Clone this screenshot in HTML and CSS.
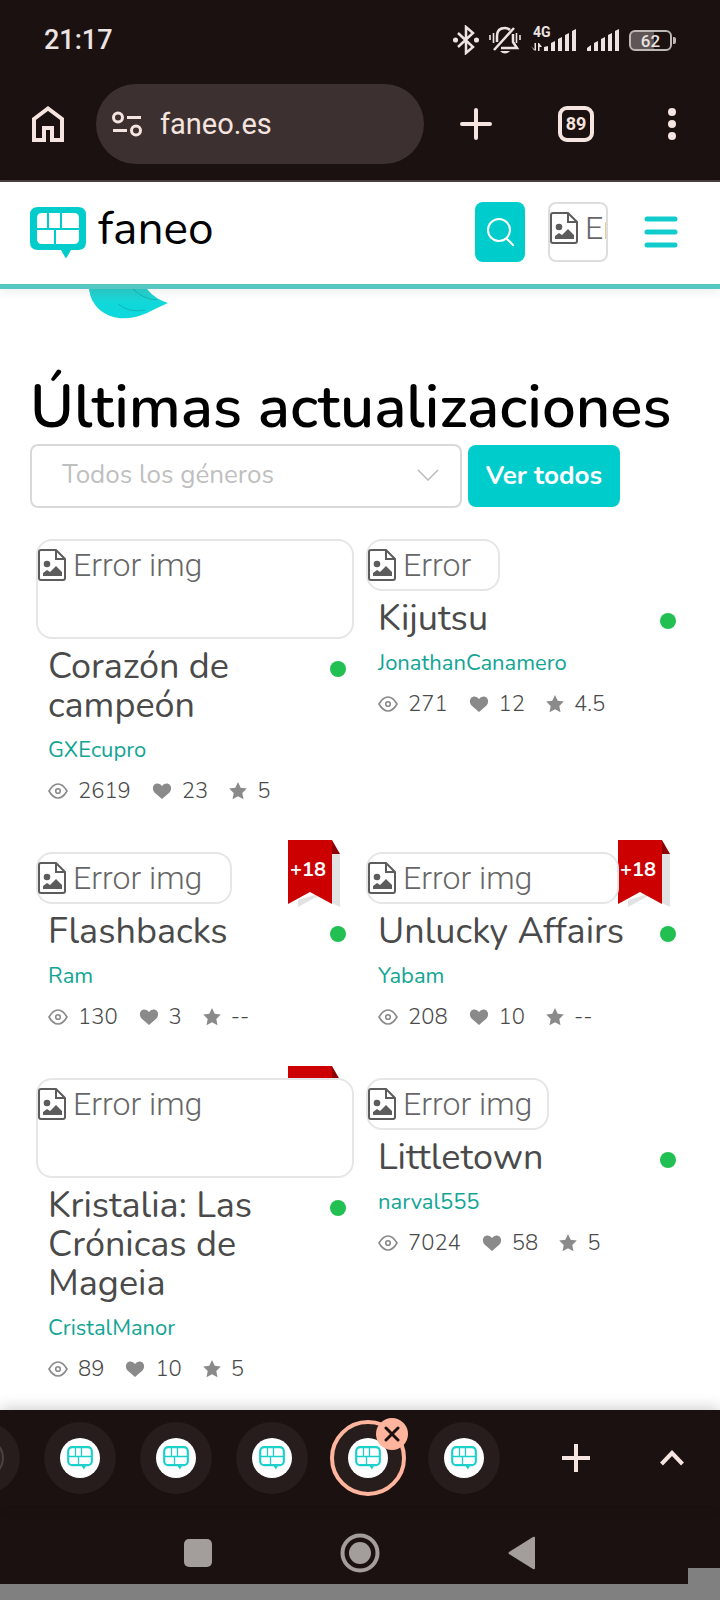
FILE: index.html
```html
<!DOCTYPE html>
<html lang="es">
    <head>
        <meta charset="utf-8">
        <meta name="viewport" content="width=device-width, initial-scale=1">
        <title>faneo</title>
        <link rel="stylesheet" href="styles.css">
    </head>
    <body>
        <!-- Shared icons -->
        <svg class="sprite" aria-hidden="true">
            <symbol id="logo" viewBox="0 0 56 51">
                <path fill="#0cc" d="M8 0H48Q56 0 56 8V35Q56 43 48 43H41L37 50Q36 52 35 50L31 43H8Q0 43 0 35V8Q0 0 8 0Z"/>
                <path fill="#fff" d="M12 6H17V21H7V11Q7 6 12 6ZM19 6H30V21H19ZM32 6H44Q49 6 49 11V21H32ZM7 23H24V37H12Q7 37 7 32ZM26 23H49V32Q49 37 44 37H26Z"/>
            </symbol>
            <symbol id="logo-small" viewBox="0 0 26 24">
                <rect x="1.200" y="1.200" width="23.600" height="18" rx="4" fill="none" stroke="#1cd0cb" stroke-width="2.200"/>
                <path fill="none" stroke="#1cd0cb" stroke-width="1.300" d="M2 10.500H24M8.500 2V10M14.500 2V10M11.500 11V19"/>
                <path fill="#1cd0cb" d="M14 19H19.500L16.800 23.500Z"/>
            </symbol>
            <symbol id="broken" viewBox="0 0 28 32">
                <path fill="none" stroke="#5c5c5c" stroke-width="2" d="M3 1H18L27 10V29Q27 31 25 31H3Q1 31 1 29V3Q1 1 3 1ZM18 1V10H27"/>
                <circle cx="9" cy="15" r="3.300" fill="#5c5c5c"/>
                <path fill="#5c5c5c" d="M5 27V24L9 21L12 23L18 17L24 23V27Z"/>
            </symbol>
            <symbol id="eye" viewBox="0 0 20 16">
                <path fill="none" stroke="#8a8a8a" stroke-width="1.600" d="M1 8Q5 1 10 1T19 8Q15 15 10 15T1 8Z"/>
                <circle cx="10" cy="8" r="2.300" fill="none" stroke="#8a8a8a" stroke-width="1.600"/>
            </symbol>
            <symbol id="heart" viewBox="0 0 20 16">
                <path fill="#8a8a8a" d="M10 16L2.500 9.500C-.5 6 .8 .5 5.500 .5Q8.500 .5 10 3Q11.500 .5 14.500 .5C19.200 .5 20.500 6 17.500 9.500Z"/>
            </symbol>
            <symbol id="star" viewBox="0 0 18 18">
                <path fill="#8a8a8a" d="M9 0L11.700 5.700L17.800 6.500L13.300 10.900L14.500 17.300L9 14.200L3.500 17.300L4.700 10.900L.2 6.500L6.300 5.700Z"/>
            </symbol>
            <symbol id="ribbon" viewBox="0 0 52 68">
                <path fill="#e2e2e2" d="M44 14H52V67L44 63L30 56L10 67V60L44 50Z"/>
                <path fill="#c00" d="M0 0H44V64L22 52L0 64Z"/>
                <path fill="#8d0006" d="M44 0L52 14H44Z"/>
            </symbol>
        </svg>

        <div class="status-bar">
            <span class="clock">21:17</span>
            <div class="status-icons">
                <svg width="26" height="30" viewBox="0 0 26 30" fill="none" stroke="#ebe4e2" stroke-width="2.500">
                    <path d="M5 8L20 22L13 28V2L20 8L5 22"/>
                    <circle cx="2.500" cy="15" r="1.300"/><circle cx="23.500" cy="15" r="1.300"/>
                </svg>
                <svg width="32" height="30" viewBox="0 0 32 30" fill="none" stroke="#ebe4e2" stroke-width="2.500">
                    <path d="M8 17V11Q8 3 16 3Q19 3 21 5M5 25L25 3M24 9V17L28 23H12"/>
                    <path d="M1 10V15M4.500 8V18M27.500 8V18M31 10V15" stroke-width="1.600"/>
                    <path d="M11 26H21Q16 31 11 26Z" fill="#ebe4e2" stroke="none"/>
                </svg>
                <svg width="46" height="30" viewBox="0 0 46 30" fill="#ebe4e2">
                    <text class="net-label" x="2" y="12">4G</text>
                    <path d="M0 21L3.500 26V18H5V26M7 26V18H8L11 22H8.500V26Z"/>
                    <path d="M13 22L17 21V26H13ZM20 18L24 16V26H20ZM27 14L31 12V26H27ZM34 10L38 8V26H34ZM41 6L45 4V26H41Z"/>
                </svg>
                <svg width="32" height="30" viewBox="0 0 32 30" fill="#ebe4e2">
                    <path d="M0 23L4 20V26H0ZM7 18L11 16V26H7ZM14 14L18 12V26H14ZM21 10L25 8V26H21ZM28 6L32 4V26H28Z"/>
                </svg>
                <div class="battery"><span>62</span></div>
            </div>
        </div>

        <div class="toolbar">
            <button class="tool" aria-label="Inicio">
                <svg width="32" height="36" viewBox="0 0 32 36" fill="none" stroke="#f5e4df" stroke-width="4">
                    <path d="M2 13L16 2.500L30 13V34H20V22H12V34H2Z"/>
                </svg>
            </button>
            <a class="address" href="#">
                <svg width="30" height="26" viewBox="0 0 30 26" fill="none" stroke="#f5e4df" stroke-width="3">
                    <circle cx="6" cy="6.500" r="4.500"/><circle cx="24" cy="19.500" r="4.500"/>
                    <path d="M15 6.500H29M1 19.500H15"/>
                </svg>
                <span>faneo.es</span>
            </a>
            <button class="tool tool-new" aria-label="Nueva pestaña">
                <svg width="32" height="32" viewBox="0 0 32 32" stroke="#f5e4df" stroke-width="4" stroke-linecap="round"><path d="M16 2V30M2 16H30"/></svg>
            </button>
            <button class="tool"><span class="tab-count">89</span></button>
            <button class="tool" aria-label="Más opciones">
                <svg width="8" height="32" viewBox="0 0 8 32" fill="#f5e4df"><circle cx="4" cy="4" r="4"/><circle cx="4" cy="16" r="4"/><circle cx="4" cy="28" r="4"/></svg>
            </button>
        </div>

        <header class="site-header">
            <a class="brand" href="#">
                <svg width="56" height="51"><use href="#logo"/></svg>
                <span>faneo</span>
            </a>
            <button class="search" aria-label="Buscar">
                <svg width="28" height="28" viewBox="0 0 28 28" fill="none" stroke="#fff" stroke-width="2"><circle cx="13" cy="12" r="11"/><path d="M20 20L28 28"/></svg>
            </button>
            <a class="avatar" href="#"><svg width="28" height="32"><use href="#broken"/></svg><span>Error img</span></a>
            <button class="menu" aria-label="Menú">
                <svg width="34" height="32" viewBox="0 0 34 32" stroke="#1cc" stroke-width="5" stroke-linecap="round"><path d="M3 3H31M3 16H31M3 29H31"/></svg>
            </button>
        </header>

        <main class="content">
            <svg class="leaf" width="80" height="30" viewBox="0 0 80 30">
                <defs><linearGradient id="leaf-fill" x1="0" y1="0" x2="0" y2="1"><stop offset="0" stop-color="#2dcfcb"/><stop offset=".5" stop-color="#10d8da"/><stop offset="1" stop-color="#0dd9dc"/></linearGradient></defs>
                <path fill="url(#leaf-fill)" d="M0 0H58Q66 10 79 14Q70 18 58 24C30 37 3 25 0 0Z"/>
                <path fill="none" stroke="#13b4b6" d="M44 0Q54 10 68 11M29 15Q40 24 56 21"/>
            </svg>

            <h1 class="title">Últimas actualizaciones</h1>
            <div class="filters">
                <div class="genre">
                    <select aria-label="Género"><option>Todos los géneros</option></select>
                    <svg width="22" height="12" viewBox="0 0 22 12" fill="none" stroke="#bbb" stroke-width="1.500"><path d="M1 1L11 11L21 1"/></svg>
                </div>
                <button class="see-all">Ver todos</button>
            </div>

            <div class="grid">
                <article class="card">
                    <div class="thumb thumb-tall"><svg><use href="#broken"/></svg>Error img</div>
                    <div class="info">
                        <div class="name"><h2>Corazón de campeón</h2><i class="dot"></i></div>
                        <a class="author" href="#">GXEcupro</a>
                        <div class="stats">
                            <span><svg><use href="#eye"/></svg>2619</span>
                            <span><svg><use href="#heart"/></svg>23</span>
                            <span><svg class="star"><use href="#star"/></svg>5</span>
                        </div>
                    </div>
                </article>
                <article class="card">
                    <div class="thumb thumb-xs"><svg><use href="#broken"/></svg>Error</div>
                    <div class="info">
                        <div class="name"><h2>Kijutsu</h2><i class="dot"></i></div>
                        <a class="author" href="#">JonathanCanamero</a>
                        <div class="stats">
                            <span><svg><use href="#eye"/></svg>271</span>
                            <span><svg><use href="#heart"/></svg>12</span>
                            <span><svg class="star"><use href="#star"/></svg>4.5</span>
                        </div>
                    </div>
                </article>
                <article class="card">
                    <div class="adult"><svg><use href="#ribbon"/></svg><span>+18</span></div>
                    <div class="thumb thumb-md"><svg><use href="#broken"/></svg>Error img</div>
                    <div class="info">
                        <div class="name"><h2>Flashbacks</h2><i class="dot"></i></div>
                        <a class="author" href="#">Ram</a>
                        <div class="stats">
                            <span><svg><use href="#eye"/></svg>130</span>
                            <span><svg><use href="#heart"/></svg>3</span>
                            <span><svg class="star"><use href="#star"/></svg>--</span>
                        </div>
                    </div>
                </article>
                <article class="card">
                    <div class="adult"><svg><use href="#ribbon"/></svg><span>+18</span></div>
                    <div class="thumb thumb-lg"><svg><use href="#broken"/></svg>Error img</div>
                    <div class="info">
                        <div class="name"><h2>Unlucky Affairs</h2><i class="dot"></i></div>
                        <a class="author" href="#">Yabam</a>
                        <div class="stats">
                            <span><svg><use href="#eye"/></svg>208</span>
                            <span><svg><use href="#heart"/></svg>10</span>
                            <span><svg class="star"><use href="#star"/></svg>--</span>
                        </div>
                    </div>
                </article>
                <article class="card">
                    <div class="adult"><svg><use href="#ribbon"/></svg></div>
                    <div class="thumb thumb-tall"><svg><use href="#broken"/></svg>Error img</div>
                    <div class="info">
                        <div class="name"><h2>Kristalia: Las Crónicas de Mageia</h2><i class="dot"></i></div>
                        <a class="author" href="#">CristalManor</a>
                        <div class="stats">
                            <span><svg><use href="#eye"/></svg>89</span>
                            <span><svg><use href="#heart"/></svg>10</span>
                            <span><svg class="star"><use href="#star"/></svg>5</span>
                        </div>
                    </div>
                </article>
                <article class="card">
                    <div class="thumb thumb-sm"><svg><use href="#broken"/></svg>Error img</div>
                    <div class="info">
                        <div class="name"><h2>Littletown</h2><i class="dot"></i></div>
                        <a class="author" href="#">narval555</a>
                        <div class="stats">
                            <span><svg><use href="#eye"/></svg>7024</span>
                            <span><svg><use href="#heart"/></svg>58</span>
                            <span><svg class="star"><use href="#star"/></svg>5</span>
                        </div>
                    </div>
                </article>
            </div>
        </main>

        <div class="tab-strip">
            <div class="tabs">
                <button class="tab" aria-label="Pestaña"><span class="tab-ring"><span class="favicon favicon-dim"></span></span></button>
                <button class="tab" aria-label="faneo"><span class="tab-ring"><span class="favicon"><svg><use href="#logo-small"/></svg></span></span></button>
                <button class="tab" aria-label="faneo"><span class="tab-ring"><span class="favicon"><svg><use href="#logo-small"/></svg></span></span></button>
                <button class="tab" aria-label="faneo"><span class="tab-ring"><span class="favicon"><svg><use href="#logo-small"/></svg></span></span></button>
                <button class="tab" aria-label="Cerrar faneo">
                    <span class="tab-ring tab-active"><span class="favicon"><svg><use href="#logo-small"/></svg></span></span>
                    <span class="close"><svg width="16" height="16" viewBox="0 0 16 16" stroke="#1b1110" stroke-width="3" stroke-linecap="round"><path d="M2 2L14 14M14 2L2 14"/></svg></span>
                </button>
                <button class="tab" aria-label="faneo"><span class="tab-ring"><span class="favicon"><svg><use href="#logo-small"/></svg></span></span></button>
            </div>
            <button class="tool" aria-label="Nueva pestaña">
                <svg width="28" height="28" viewBox="0 0 28 28" stroke="#f5e4df" stroke-width="4"><path d="M14 0V28M0 14H28"/></svg>
            </button>
            <button class="tool" aria-label="Mostrar pestañas">
                <svg width="24" height="16" viewBox="0 0 24 16" fill="none" stroke="#f5e4df" stroke-width="4"><path d="M1.500 14L12 3L22.500 14"/></svg>
            </button>
        </div>
        <nav class="system-nav">
            <button aria-label="Recientes"><svg width="28" height="28" viewBox="0 0 28 28" fill="#a39d9c"><rect width="28" height="28" rx="5"/></svg></button>
            <button aria-label="Inicio"><svg width="40" height="40" viewBox="0 0 40 40"><circle cx="20" cy="20" r="17.500" fill="none" stroke="#a39d9c" stroke-width="4"/><circle cx="20" cy="20" r="11" fill="#a39d9c"/></svg></button>
            <button aria-label="Atrás"><svg width="28" height="34" viewBox="0 0 28 34" fill="#a39d9c"><path d="M25 1Q27 0 27 2V32Q27 34 25 33L1 18Q0 17 1 16Z"/></svg></button>
        </nav>
        <div class="page-edge"><span></span></div>
    </body>
</html>
```
FILE: styles.css
```css
* {
    box-sizing: border-box;
}
body {
    margin: 0;
    height: 100vh;
    display: flex;
    flex-direction: column;
    background: #fff;
    color: #4a4a4a;
    font-family: Nunito, "Open Sans", "Noto Sans", sans-serif;
    font-weight: 300;
}
svg {
    display: block;
    flex: none;
}
button {
    padding: 0;
    border: none;
    background: none;
    font-family: inherit;
}
a {
    color: inherit;
    text-decoration: none;
}
.sprite {
    position: absolute;
    width: 0;
    height: 0;
}

/* Phone status bar */
.status-bar {
    flex: none;
    display: flex;
    align-items: center;
    justify-content: space-between;
    height: 76px;
    padding: 4px 44px 0;
    background: #1b1110;
    color: #ebe4e2;
    font-family: Roboto, sans-serif;
    font-weight: 500;
}
.clock {
    font-size: 27px;
}
.status-icons {
    display: flex;
    align-items: center;
    gap: 10px;
}
.net-label {
    font-size: 14px;
    font-weight: 700;
}
.battery {
    position: relative;
    width: 43px;
    height: 21px;
    margin-right: 4px;
    border: 2px solid #bdb7b5;
    border-radius: 6px;
    background: linear-gradient(90deg, #5e5655 60%, #1b1110 60%);
    font-size: 17px;
    line-height: 18px;
    text-align: center;
}
.battery::after {
    content: "";
    position: absolute;
    right: -6px;
    top: 5px;
    width: 3px;
    height: 7px;
    border-radius: 0 2px 2px 0;
    background: #bdb7b5;
}

/* Browser toolbar */
.toolbar {
    flex: none;
    display: flex;
    align-items: center;
    height: 106px;
    padding-bottom: 8px;
    border-bottom: 2px solid #4b4141;
    background: #1b1110;
}
.tool {
    flex: none;
    width: 96px;
    height: 80px;
    display: flex;
    align-items: center;
    justify-content: center;
}
.tool-new {
    width: 104px;
}
.address {
    flex: 1;
    display: flex;
    align-items: center;
    gap: 18px;
    height: 80px;
    padding: 0 16px;
    border-radius: 40px;
    background: #3c3130;
    color: #f5e4df;
    font-family: Roboto, sans-serif;
    font-size: 29px;
    font-weight: 400;
}
.tab-count {
    width: 36px;
    height: 36px;
    border: 4px solid #f5e4df;
    border-radius: 9px;
    color: #f5e4df;
    font-family: Roboto, sans-serif;
    font-size: 18px;
    font-weight: 700;
    line-height: 28px;
}

/* Site header */
.site-header {
    flex: none;
    position: relative;
    display: flex;
    align-items: center;
    height: 107px;
    padding: 0 42px 2px 30px;
    border-bottom: 5px solid #55c8c4;
    box-shadow: 0 3px 10px rgba(0, 0, 0, 0.07);
}
.brand {
    flex: 1;
    display: flex;
    align-items: center;
    gap: 12px;
    color: #000;
    font-size: 46px;
    font-weight: 400;
    line-height: 54px;
}
.brand span {
    padding-bottom: 6px;
}
.search {
    display: flex;
    align-items: center;
    justify-content: center;
    width: 50px;
    height: 60px;
    margin-right: 23px;
    border-radius: 8px;
    background: #0cc;
}
.avatar {
    display: flex;
    gap: 7px;
    width: 60px;
    height: 60px;
    margin-right: 36px;
    padding-top: 8px;
    overflow: hidden;
    border: 2px solid #ddd;
    border-radius: 8px;
    color: #666;
    font-family: Roboto, sans-serif;
    font-size: 32px;
    line-height: 32px;
    white-space: nowrap;
}

/* Latest updates */
.content {
    flex: 1;
    min-height: 0;
    overflow: hidden;
    padding: 0 30px;
}
.leaf {
    margin-left: 59px;
}
.title {
    margin: 51px 0 0;
    color: #000;
    font-size: 60px;
    font-weight: 600;
    line-height: 74px;
    white-space: nowrap;
}
.filters {
    display: flex;
    gap: 6px;
    height: 64px;
    margin-bottom: 31px;
}
.genre {
    position: relative;
    width: 432px;
}
.genre select {
    width: 100%;
    height: 64px;
    padding: 0 30px 4px;
    appearance: none;
    border: 2px solid #d9d9d9;
    border-radius: 8px;
    background: #fff;
    color: #bfbfbf;
    font-family: inherit;
    font-size: 26px;
}
.genre svg {
    position: absolute;
    right: 23px;
    top: 25px;
}
.see-all {
    width: 152px;
    height: 62px;
    margin-top: 1px;
    padding-bottom: 2px;
    border-radius: 8px;
    background: #0cc;
    color: #fff;
    font-size: 26px;
    font-weight: 700;
}
.grid {
    display: grid;
    grid-template-columns: 1fr 1fr;
    row-gap: 45px;
}
.card {
    position: relative;
    margin: 0 6px;
}
.thumb {
    position: relative;
    display: flex;
    gap: 7px;
    height: 52px;
    padding-top: 8px;
    border: 2px solid #e6e6e6;
    border-radius: 16px;
    background: #fff;
    color: #666;
    font-family: Roboto, sans-serif;
    font-size: 32px;
    line-height: 32px;
}
.thumb svg {
    width: 28px;
    height: 32px;
}
.thumb-tall {
    height: 100px;
}
.thumb-xs {
    width: 134px;
}
.thumb-sm {
    width: 183px;
}
.thumb-md {
    width: 196px;
}
.thumb-lg {
    width: 253px;
}
.adult {
    position: absolute;
    right: 14px;
    top: -12px;
    width: 52px;
    height: 68px;
}
.adult svg {
    width: 52px;
    height: 68px;
}
.adult span {
    position: absolute;
    left: 2px;
    top: 18px;
    color: #fff;
    font-size: 20px;
    font-weight: 700;
    line-height: 24px;
}
.info {
    padding: 8px 8px 0 12px;
}
.name {
    display: flex;
    justify-content: space-between;
    margin-bottom: 9px;
}
.name h2 {
    max-width: 255px;
    margin: 0;
    font-size: 36px;
    font-weight: 400;
    line-height: 39px;
}
.dot {
    flex: none;
    width: 16px;
    height: 16px;
    margin-top: 14px;
    border-radius: 50%;
    background: #22c052;
}
.author {
    display: block;
    color: #12a594;
    font-size: 22px;
    font-weight: 400;
    line-height: 32px;
}
.stats {
    display: flex;
    gap: 21px;
    margin-top: 9px;
    font-size: 22px;
    line-height: 32px;
}
.stats span {
    display: flex;
    align-items: center;
    gap: 10px;
}
.stats svg {
    width: 20px;
    height: 18px;
}
.stats .star {
    width: 18px;
}

/* Tabs at the bottom */
.tab-strip {
    flex: none;
    position: relative;
    display: flex;
    align-items: center;
    height: 96px;
    background: #1b1110;
    box-shadow: 0 -2px 14px rgba(0, 0, 0, 0.2);
}
.tabs {
    flex: 1;
    min-width: 0;
    display: flex;
    justify-content: flex-end;
    padding-right: 16px;
    overflow: hidden;
}
.tab {
    flex: none;
    position: relative;
    display: flex;
    align-items: center;
    justify-content: center;
    width: 96px;
    height: 96px;
}
.tab-ring {
    display: flex;
    align-items: center;
    justify-content: center;
    width: 72px;
    height: 72px;
    border-radius: 50%;
    background: #261d1c;
}
.tab-active {
    width: 76px;
    height: 76px;
    border: 4px solid #ffb59d;
}
.favicon {
    display: flex;
    align-items: center;
    justify-content: center;
    width: 40px;
    height: 40px;
    border-radius: 50%;
    background: #fff;
}
.favicon svg {
    width: 26px;
    height: 24px;
}
.favicon-dim {
    border: 2px solid #4a4140;
    background: #2c2322;
}
.close {
    position: absolute;
    right: 8px;
    top: 8px;
    display: flex;
    align-items: center;
    justify-content: center;
    width: 32px;
    height: 32px;
    border-radius: 50%;
    background: #ffb59d;
}
.system-nav {
    flex: none;
    display: flex;
    justify-content: center;
    gap: 108px;
    height: 78px;
    padding-bottom: 16px;
    background: #1b1110;
}
.system-nav button {
    display: flex;
    align-items: center;
    justify-content: center;
    width: 54px;
    padding-top: 32px;
}
.page-edge {
    flex: none;
    position: relative;
    height: 16px;
    background: #808080;
}
.page-edge span {
    position: absolute;
    right: 0;
    bottom: 16px;
    width: 32px;
    height: 16px;
    background: #808080;
}
```
